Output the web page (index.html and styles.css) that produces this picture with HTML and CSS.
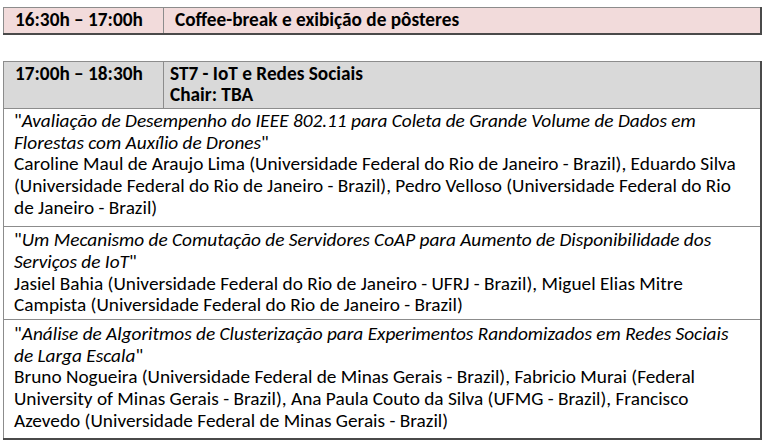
FILE: index.html
```html
<!DOCTYPE html>
<html lang="pt">
<head>
<meta charset="utf-8">
<title>Programação</title>
<link rel="stylesheet" href="styles.css">
</head>
<body>
<div class="page">
  <table class="sched">
    <tr class="pink">
      <td class="time">16:30h – 17:00h</td>
      <td class="title">Coffee-break e exibição de pôsteres</td>
    </tr>
  </table>

  <table class="sched second">
    <tr class="gray">
      <td class="time">17:00h – 18:30h</td>
      <td class="title">ST7 - IoT e Redes Sociais<br>Chair: TBA</td>
    </tr>
    <tr class="r1">
      <td class="paper" colspan="2">"<i>Avaliação de Desempenho do IEEE 802.11 para Coleta de Grande Volume de Dados em<br>Florestas com Auxílio de Drones</i>"<br>Caroline Maul de Araujo Lima (Universidade Federal do Rio de Janeiro - Brazil), Eduardo Silva<br>(Universidade Federal do Rio de Janeiro - Brazil), Pedro Velloso (Universidade Federal do Rio<br>de Janeiro - Brazil)</td>
    </tr>
    <tr class="r2">
      <td class="paper" colspan="2">"<i>Um Mecanismo de Comutação de Servidores CoAP para Aumento de Disponibilidade dos<br>Serviços de IoT</i>"<br>Jasiel Bahia (Universidade Federal do Rio de Janeiro - UFRJ - Brazil), Miguel Elias Mitre<br>Campista (Universidade Federal do Rio de Janeiro - Brazil)</td>
    </tr>
    <tr class="r3">
      <td class="paper" colspan="2">"<i>Análise de Algoritmos de Clusterização para Experimentos Randomizados em Redes Sociais<br>de Larga Escala</i>"<br>Bruno Nogueira (Universidade Federal de Minas Gerais - Brazil), Fabricio Murai (Federal<br>University of Minas Gerais - Brazil), Ana Paula Couto da Silva (UFMG - Brazil), Francisco<br>Azevedo (Universidade Federal de Minas Gerais - Brazil)</td>
    </tr>
  </table>
</div>
</body>
</html>
```

FILE: styles.css
```css
html, body {
  margin: 0;
  padding: 0;
  background: #ffffff;
}

.page {
  padding: 7px 0 0 3px;
  font-family: "Carlito", "Lato", "Liberation Sans", sans-serif;
  font-size: 19.3px;
  line-height: 21.67px;
  color: #000;
}

.sched {
  border-collapse: collapse;
  width: 759px;
  border-right: 2px solid #4a4a4a;
  border-bottom: 2px solid #4a4a4a;
}

.second {
  margin-top: 26px;
}

.sched td {
  border: 1px solid #8c8c8c;
  vertical-align: top;
  white-space: nowrap;
}

.pink td {
  background: #f2dbdb;
  font-weight: bold;
  padding: 1px 10px 2px 11px;
}

.gray td {
  background: #d9d9d9;
  font-weight: bold;
  padding: 1px 10px 2px 11px;
}

.gray .title {
  padding-left: 6px;
}

.time {
  width: 138px;
}

.paper {
  padding: 1px 9px 8px 10px;
}

.r2 .paper {
  padding: 2px 9px 3px 10px;
}

.r3 .paper {
  padding: 3px 9px 7px 10px;
}
```
